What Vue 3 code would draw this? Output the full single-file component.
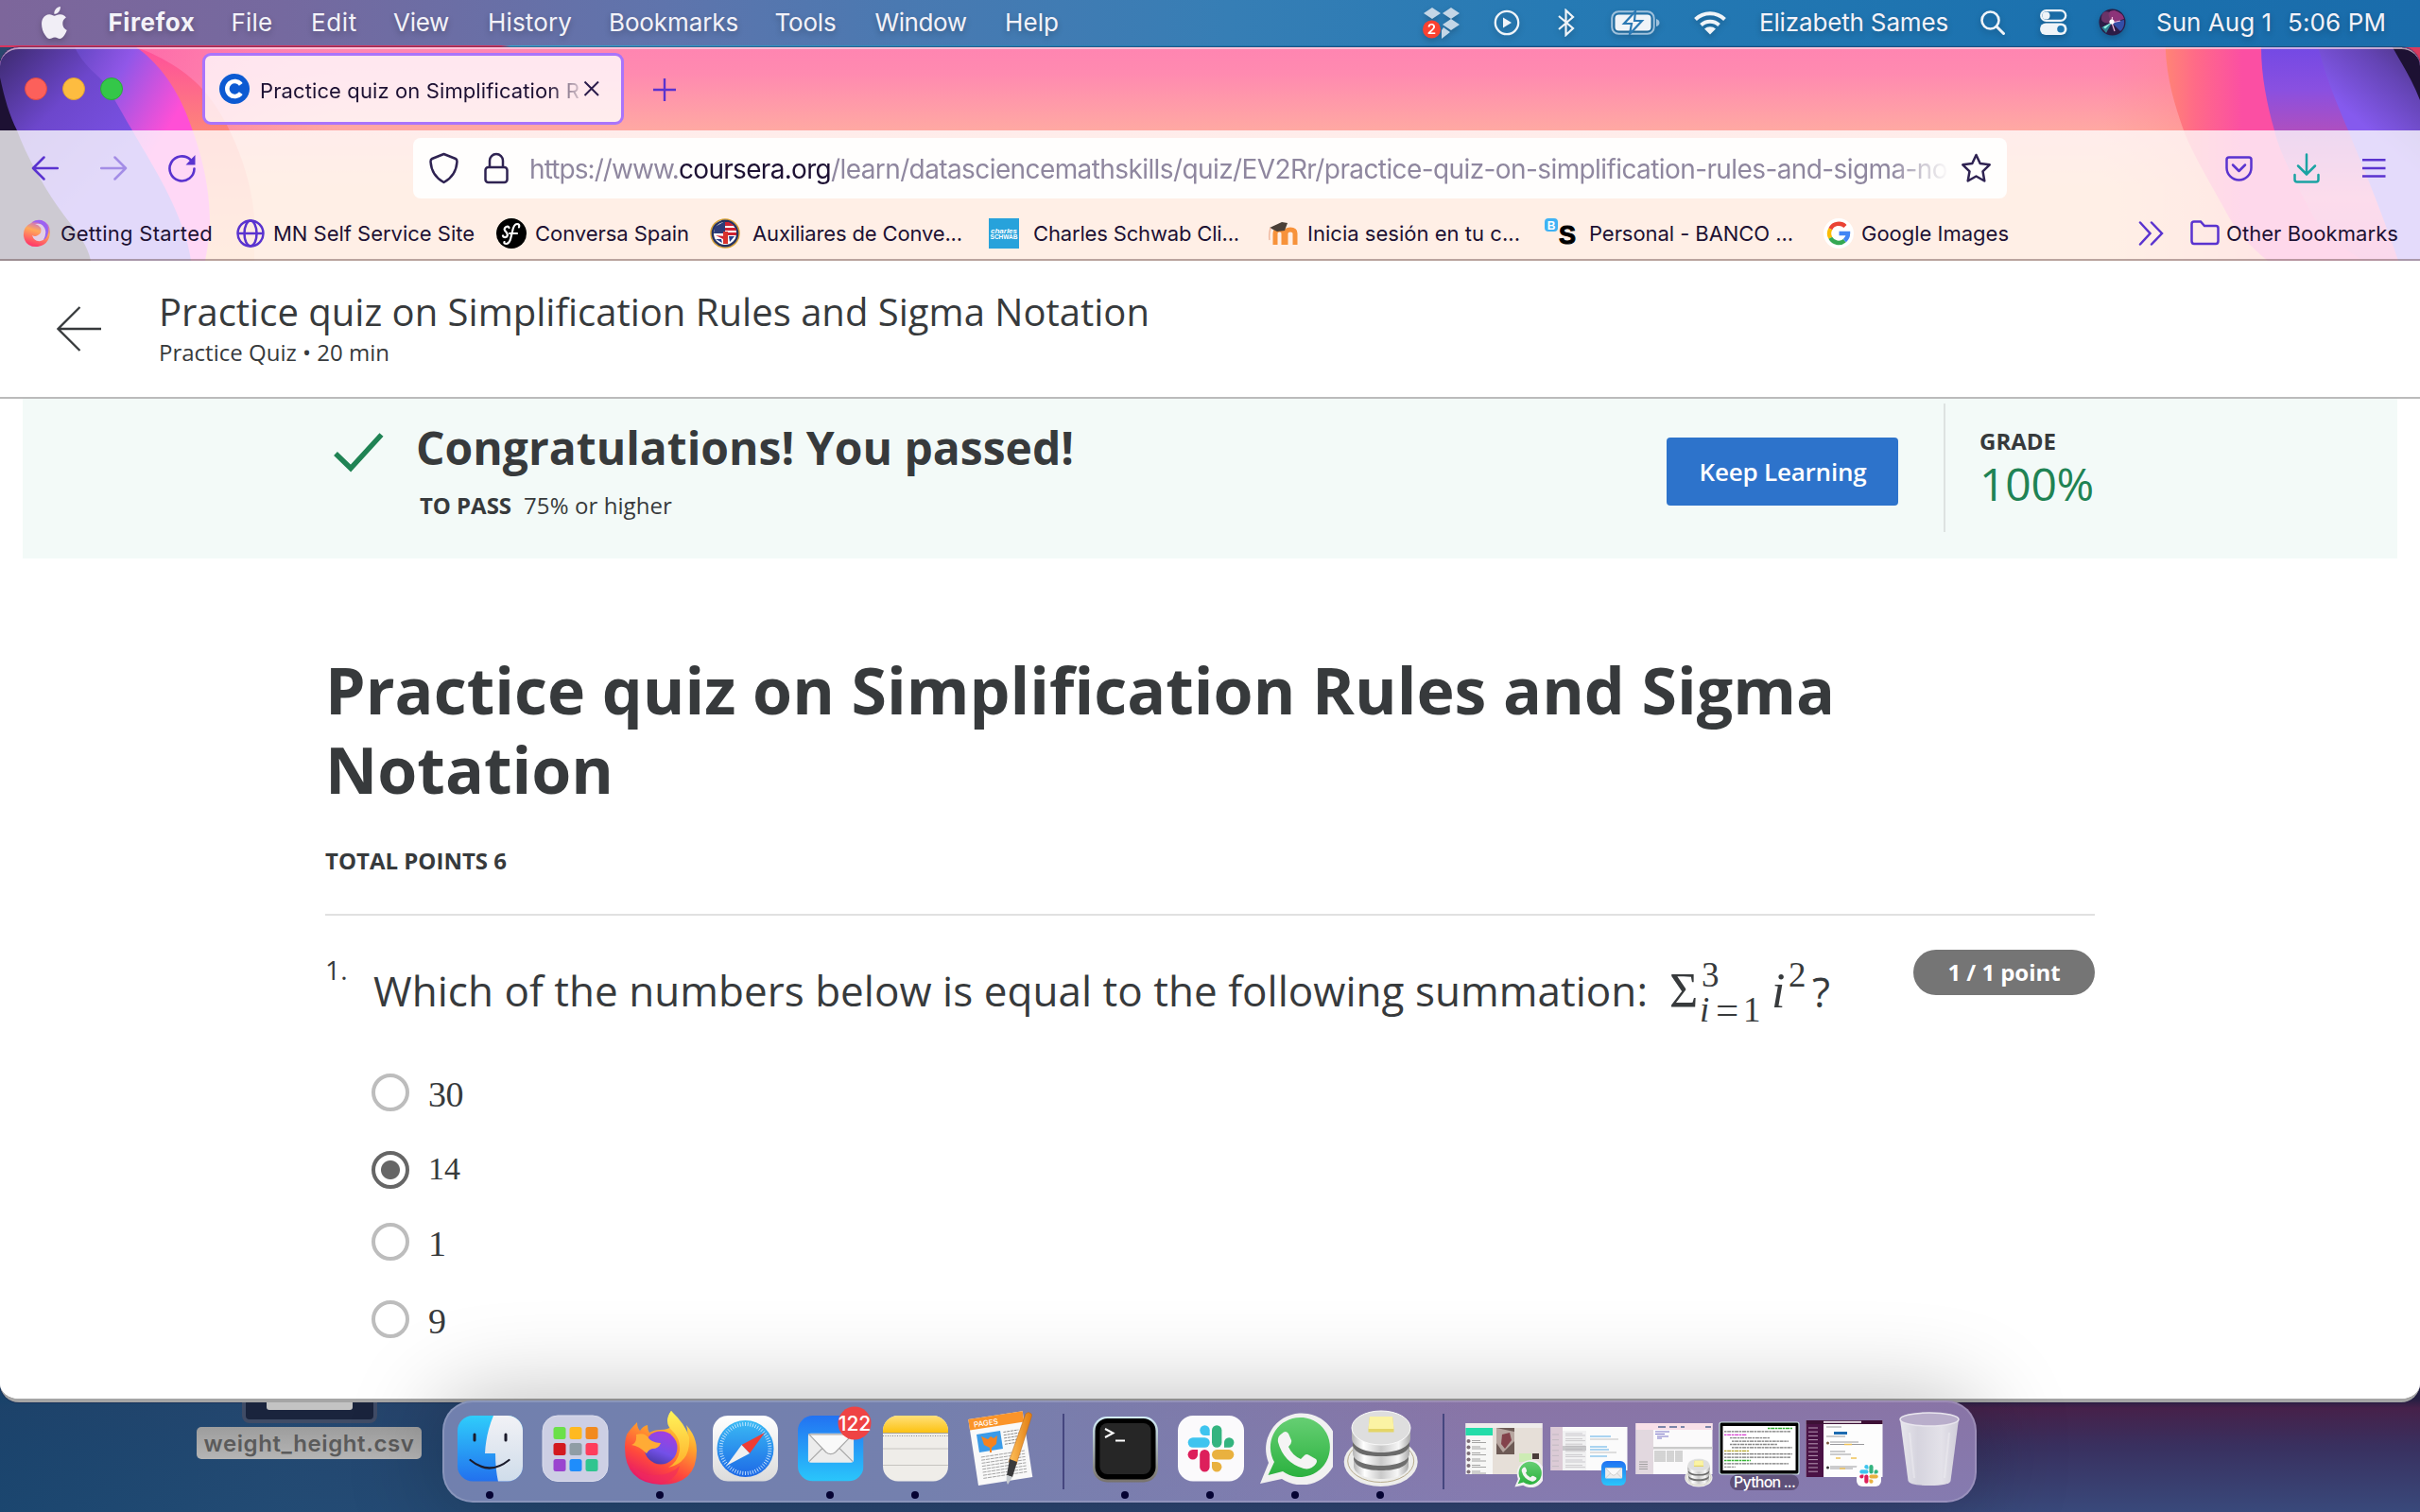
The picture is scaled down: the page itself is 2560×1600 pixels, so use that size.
<script setup>
// Tracks a label so that it fills the given width in pixels
const vFit = {
  mounted(el, { value }) {
    const n = el.textContent.length
    const natural = el.getBoundingClientRect().width
    el.style.letterSpacing = ((value - natural) / n).toFixed(3) + 'px'
  }
}

const menus = [
  ['Firefox', 92], ['File', 44], ['Edit', 49], ['View', 59], ['History', 89],
  ['Bookmarks', 137], ['Tools', 65], ['Window', 97], ['Help', 57]
]

const options = [
  { label: '30', w: 37 },
  { label: '14', w: 34, checked: true },
  { label: '1', w: 18 },
  { label: '9', w: 18 }
]

const pad = ['#6be04a', '#ffb921', '#f28a1e', '#d31a1f', '#8f9da5', '#ff3e5c', '#9a44cf', '#1f8dfb', '#2fc58f']
const ticks = Array.from({ length: 60 }, (_, i) => i * 6)
const chatRows = [0, 1, 2, 3, 4, 5]
const termRows = [
  ['#35b435', 46, 26], ['#777', 0, 70], ['#d63bd0', 0, 24], ['#888', 6, 42], ['#777', 8, 60], ['#888', 6, 50],
  ['#777', 8, 64], ['#b5a52a', 0, 26], ['#777', 0, 72], ['#777', 0, 70], ['#35b435', 0, 28], ['#777', 0, 68], ['#999', 0, 12]
]
</script>

<template>
  <div class="desktop">
    <svg class="defs" width="0" height="0" aria-hidden="true">
      <defs>
        <linearGradient id="gFinder" x1="0" y1="0" x2="0" y2="1"><stop offset="0" stop-color="#2fcdfb" /><stop offset="1" stop-color="#2270ee" /></linearGradient>
        <linearGradient id="gFace" x1="0" y1="0" x2="0" y2="1"><stop offset="0" stop-color="#f2f2f6" /><stop offset="1" stop-color="#cfdcea" /></linearGradient>
        <linearGradient id="gFox" x1=".8" y1="0" x2=".3" y2="1"><stop offset="0" stop-color="#fff04f" /><stop offset=".35" stop-color="#ffa52c" /><stop offset=".7" stop-color="#ff4a3c" /><stop offset="1" stop-color="#e5156b" /></linearGradient>
        <linearGradient id="gFlame" x1="0" y1="0" x2="0" y2="1"><stop offset="0" stop-color="#fff45a" /><stop offset="1" stop-color="#ffae2a" /></linearGradient>
        <linearGradient id="gGlobe" x1=".7" y1="0" x2=".3" y2="1"><stop offset="0" stop-color="#a63ce0" /><stop offset=".6" stop-color="#7350e8" /><stop offset="1" stop-color="#4a3aa8" /></linearGradient>
        <linearGradient id="gSafari" x1="0" y1="0" x2="0" y2="1"><stop offset="0" stop-color="#3abaf4" /><stop offset="1" stop-color="#1d68e6" /></linearGradient>
        <linearGradient id="gMail" x1="0" y1="0" x2="0" y2="1"><stop offset="0" stop-color="#2272f2" /><stop offset="1" stop-color="#2ac6fb" /></linearGradient>
        <linearGradient id="gWhite" x1="0" y1="0" x2="0" y2="1"><stop offset="0" stop-color="#ffffff" /><stop offset="1" stop-color="#dcdcdc" /></linearGradient>
        <linearGradient id="gNote" x1="0" y1="0" x2="0" y2="1"><stop offset="0" stop-color="#ffe07a" /><stop offset="1" stop-color="#fcc211" /></linearGradient>
        <linearGradient id="gWa" x1="0" y1="0" x2="0" y2="1"><stop offset="0" stop-color="#66cf73" /><stop offset="1" stop-color="#2bb13f" /></linearGradient>
        <linearGradient id="gTerm" x1="0" y1="0" x2="0" y2="1"><stop offset="0" stop-color="#d3eefa" /><stop offset="1" stop-color="#77716b" /></linearGradient>
        <linearGradient id="gDisk" x1="0" y1="0" x2="1" y2="0"><stop offset="0" stop-color="#b4b4b4" /><stop offset=".2" stop-color="#ffffff" /><stop offset=".5" stop-color="#c9c9c9" /><stop offset=".8" stop-color="#f7f7f7" /><stop offset="1" stop-color="#aaaaaa" /></linearGradient>
        <linearGradient id="gTrash" x1="0" y1="0" x2="1" y2="0"><stop offset="0" stop-color="#ececf0" /><stop offset=".3" stop-color="#dad9e1" /><stop offset=".7" stop-color="#e8e7ec" /><stop offset="1" stop-color="#d4d2dc" /></linearGradient>
        <linearGradient id="gPen" x1="0" y1="0" x2="1" y2="0"><stop offset="0" stop-color="#ffc15c" /><stop offset="1" stop-color="#e07b10" /></linearGradient>
        <linearGradient id="gSwirl" x1=".6" y1="0" x2=".3" y2="1"><stop offset="0" stop-color="#b45cf0" /><stop offset=".4" stop-color="#ffa95a" /><stop offset="1" stop-color="#ff2f6a" /></linearGradient>
        <linearGradient id="tBase" x1="0" y1="0" x2="0" y2="1"><stop offset="0" stop-color="#ff85b1" /><stop offset=".12" stop-color="#ff8ab0" /><stop offset=".4" stop-color="#ffaaa2" /><stop offset=".65" stop-color="#ffb78f" /><stop offset="1" stop-color="#ffb88c" /></linearGradient>
        <linearGradient id="tDark" x1="0" y1="0" x2=".55" y2=".6"><stop offset="0" stop-color="#3c2a6e" /><stop offset=".5" stop-color="#6d47cc" /><stop offset="1" stop-color="#7b52e6" /></linearGradient>
        <linearGradient id="tPink" x1="85" y1="55" x2="190" y2="115" gradientUnits="userSpaceOnUse"><stop offset="0" stop-color="#6a49c8" /><stop offset=".4" stop-color="#9157e8" /><stop offset="1" stop-color="#ff4fd6" /></linearGradient>
        <linearGradient id="tOr" x1="0" y1="0" x2="0" y2="1"><stop offset="0" stop-color="#ff4f9c" /><stop offset=".4" stop-color="#fd8579" /><stop offset="1" stop-color="#ffab74" /></linearGradient>
        <linearGradient id="tFadeL" x1="0" y1="0" x2="1" y2="0"><stop offset="0" stop-color="#fd5fa6" stop-opacity=".7" /><stop offset="1" stop-color="#fd7fa6" stop-opacity="0" /></linearGradient>
        <linearGradient id="tFadeR" x1="2225" y1="0" x2="2400" y2="0" gradientUnits="userSpaceOnUse"><stop offset="0" stop-color="#ff8b86" stop-opacity="0" /><stop offset="1" stop-color="#ff7d86" stop-opacity=".7" /></linearGradient>
        <linearGradient id="tROr" x1="2290" y1="0" x2="2372" y2="0" gradientUnits="userSpaceOnUse"><stop offset="0" stop-color="#ff8575" /><stop offset=".4" stop-color="#ff6a88" /><stop offset="1" stop-color="#fb4fa3" /></linearGradient>
        <linearGradient id="tRPu" x1="0" y1="0" x2="0" y2="1"><stop offset="0" stop-color="#7349e4" /><stop offset=".2" stop-color="#8a50e0" /><stop offset=".4" stop-color="#b04fbe" /><stop offset=".7" stop-color="#f060a8" /><stop offset="1" stop-color="#e84fa8" /></linearGradient>
        <linearGradient id="tRDk" x1="2555" y1="20" x2="2475" y2="110" gradientUnits="userSpaceOnUse"><stop offset="0" stop-color="#3d2a66" /><stop offset=".5" stop-color="#6444b4" /><stop offset="1" stop-color="#855aee" /></linearGradient>
        <symbol id="slackMark" viewBox="21 26 50 50">
          <g fill="#3ec4ef"><path d="M44.7 37h-5.2a5.2 5.4 0 1 1 5.2-5.4z" /><rect x="21.7" y="39.3" width="23" height="10.4" rx="5.2" /></g>
          <g fill="#34b47f"><rect x="47" y="26.3" width="10.4" height="23.4" rx="5.2" /><path d="M60 49.7v-5.2a5.2 5.2 0 1 1 5.2 5.2z" /></g>
          <g fill="#dd1f5b"><path d="M32 52v5.2a5.2 5.2 0 1 1-5.2-5.2z" /><rect x="34.2" y="52" width="10.4" height="23.4" rx="5.2" /></g>
          <g fill="#e9b13f"><rect x="47" y="52" width="23.3" height="10.4" rx="5.2" /><path d="M47 65h5.2a5.2 5.2 0 1 1-5.2 5.2z" /></g>
        </symbol>
        <symbol id="waMark" viewBox="7 11 78 78">
          <path d="M8 88l9-22a38 38 0 1 1 14 17z" fill="#f1f1f1" />
          <path d="M16.500 79l6.500-14a31.500 31.500 0 1 1 9 10z" fill="url(#gWa)" />
          <path d="M31 35q4-4 7 0l3 7q1 3-3 7q4 9 13 13l4-4q2-2 5 0l7 4q2 2 0 5q-5 7-13 5q-21-6-27-28q-1-6 4-9z" fill="#f4f4f4" />
        </symbol>
        <symbol id="diskMark" viewBox="6 10 80 82">
          <ellipse cx="45.700" cy="65" rx="39" ry="26" fill="#ededeb" />
          <ellipse cx="45.700" cy="64" rx="35" ry="22.500" fill="none" stroke="#b7ab8d" stroke-width="1" />
          <path d="M17 62v7c0 9 13 14 29 14s29-5 29-14v-7z" fill="url(#gDisk)" />
          <path d="M17 50v12c2 9 14 12 29 12s27-3 29-12V50z" fill="#6e6e6e" />
          <path d="M16 46v10c0 8 14 13 30 13s30-5 30-13V46z" fill="url(#gDisk)" />
          <path d="M16 36v12c3 9 15 11 30 11s27-2 30-11V36z" fill="#6a6a6a" />
          <path d="M15 29v11c0 9 14 15 31 15s31-6 31-15V29z" fill="url(#gDisk)" />
          <ellipse cx="46" cy="29" rx="31" ry="18" fill="#dedede" stroke="#fafafa" />
          <path d="M34 17h24l1.500 13v3.500h-27V30z" fill="#e4d567" /><path d="M34 17h24l1.500 13h-27z" fill="#fbf3a4" />
        </symbol>
        <symbol id="mailMark" viewBox="10 16 70 70">
          <rect x="10" y="16" width="70" height="70" rx="16" fill="url(#gMail)" />
          <rect x="21" y="35" width="48.500" height="31" rx="3" fill="#ececec" />
          <path d="M22 65l15-15M68.500 65l-15-15" stroke="#aaa" stroke-width="1.200" />
          <path d="M22 36l18 19q5 4 10 0l18.500-19z" fill="#f9f9f9" stroke="#a8a8a8" stroke-width="1.200" />
        </symbol>
      </defs>
    </svg>

    <!-- System menu bar -->
    <header class="menubar">
      <svg class="shade" width="27" height="34" viewBox="2.2 0 19.800 24" preserveAspectRatio="none"><path fill="#f1eef6" d="M12.152 6.896c-.948 0-2.415-1.078-3.96-1.04-2.04.027-3.91 1.183-4.961 3.014-2.117 3.675-.546 9.103 1.519 12.09 1.013 1.454 2.208 3.09 3.792 3.039 1.52-.065 2.09-.987 3.935-.987 1.831 0 2.35.987 3.96.948 1.637-.026 2.676-1.48 3.676-2.948 1.156-1.688 1.636-3.325 1.662-3.415-.039-.013-3.182-1.221-3.22-4.857-.026-3.04 2.48-4.494 2.597-4.559-1.429-2.09-3.623-2.324-4.39-2.376-2-.156-3.675 1.09-4.61 1.09zM15.53 3.83c.843-1.012 1.4-2.427 1.245-3.83-1.207.052-2.662.805-3.532 1.818-.78.896-1.454 2.338-1.273 3.714 1.338.104 2.715-.688 3.559-1.701" /></svg>
      <div v-for="(m, i) in menus" :key="m[0]"><span v-fit="m[1]" class="fit" :class="{ strong: i === 0 }">{{ m[0] }}</span></div>

      <svg class="shade" width="40" height="36" viewBox="0 0 40 36">
        <path d="M10 2l9 6-9 6-9-6zM30 2l9 6-9 6-9-6zM30 14l9 6-9 6-9-6zM20 26l2-3 7 5-9 7z" fill="#c4d6e6" />
        <circle cx="9.500" cy="25" r="9.500" fill="#fb4130" /><text x="9.500" y="30" class="drop-n">2</text>
      </svg>
      <svg class="shade" width="28" height="28" viewBox="0 0 28 28"><circle cx="14" cy="14" r="12.200" fill="none" stroke="#f0f4f8" stroke-width="2.300" /><path d="M10 8.500v11l9-5.500z" fill="#f0f4f8" /></svg>
      <svg class="shade" width="18" height="30" viewBox="0 0 18 30"><path d="M1 8l15 13-7.500 7V2L16 9 1 22" fill="none" stroke="#f0f4f8" stroke-width="2.200" /></svg>
      <svg class="shade" width="52" height="26" viewBox="0 0 52 26"><rect x="1.200" y="1.200" width="44.500" height="23.600" rx="7" fill="none" stroke="#9fc1dc" stroke-width="2" /><rect x="4.500" y="4.500" width="38" height="17" rx="4" fill="#f0f4f8" /><path d="M48 9q3.500 1 3.500 4t-3.500 4z" fill="#9fc1dc" /><path d="M26 1L14 14h8l-2 11 13-14h-8z" fill="#f0f4f8" stroke="#2b79b4" stroke-width="2.200" /></svg>
      <svg class="shade" width="34" height="26" viewBox="0 0 34 26"><g fill="none" stroke="#f0f4f8" stroke-width="4"><path d="M1.500 9.500a22.500 22.500 0 0 1 31 0" /><path d="M7.500 15.500a14 14 0 0 1 19 0" /></g><path d="M17 25.500l-6-6a9 9 0 0 1 12 0z" fill="#f0f4f8" /></svg>
      <div><span v-fit="200" class="fit">Elizabeth Sames</span></div>
      <svg class="shade" width="26" height="26" viewBox="0 0 26 26"><circle cx="10.500" cy="10.500" r="9" fill="none" stroke="#f0f4f8" stroke-width="2.600" /><path d="M17 17l7.500 7.500" stroke="#f0f4f8" stroke-width="3" stroke-linecap="round" /></svg>
      <svg class="shade" width="29" height="27" viewBox="0 0 29 27"><rect x="1.200" y="1.200" width="26" height="10.600" rx="5.300" fill="none" stroke="#f0f4f8" stroke-width="2.300" /><circle cx="6.500" cy="6.500" r="4" fill="#f0f4f8" /><rect x="0" y="14.500" width="28.500" height="12.500" rx="6.200" fill="#f0f4f8" /><circle cx="22" cy="20.700" r="3.800" fill="#2075b1" /></svg>
      <svg class="shade" width="29" height="29" viewBox="0 0 29 29"><circle cx="14.500" cy="14.500" r="14" fill="#2c1c46" /><path d="M14 15Q6 2 17 2q9 3 10 9z" fill="#a63a86" opacity=".8" /><path d="M14 15q-12 2-11-6t9-5z" fill="#7a3a70" opacity=".8" /><path d="M14 15l13-3q1 8-4 12z" fill="#3557b8" opacity=".85" /><path d="M14 15L3 20l5 6z" fill="#2f9ca8" opacity=".8" /><path d="M14.500 9l-.5 6 9-2M14 15l3 9" stroke="#f3b8dc" stroke-width="1.200" fill="none" /><path d="M14 14.500L5 19.500l2 2z" fill="#8ff0e0" /><circle cx="14" cy="14" r="2.600" fill="#fff" /></svg>
      <div><span v-fit="122" class="fit">Sun Aug 1</span></div>
      <div><span v-fit="104" class="fit">5:06 PM</span></div>
    </header>

    <!-- Browser window -->
    <section class="window">
      <div class="chrome">
        <svg class="theme" width="2560" height="226" viewBox="0 50 2560 226" preserveAspectRatio="none">
          <rect x="0" y="50" width="2560" height="226" fill="url(#tBase)" />
          <path d="M144 50h220v88H200z" fill="url(#tFadeL)" />
          <path d="M144 50C165 57 200 75 219 100C244 130 266 185 269 230V276H0V50z" fill="url(#tOr)" />
          <path d="M0 50h144C165 64 185 90 197 120S222 190 222 235C222 250 219 265 217 276H0z" fill="url(#tPink)" />
          <path d="M0 50h79C88 68 98 75 108 85C120 102 132 125 140 138C158 170 195 225 202 276H0z" fill="url(#tDark)" />
          <path d="M0 82C5 105 10 122 18 138C28 165 45 195 60 217S92 255 96 276H0z" fill="#1d1133" />
          <path d="M2225 50h175v226h-175z" fill="url(#tFadeR)" />
          <path d="M2290.700 50C2292 85 2301 112 2310 138C2320 165 2345 205 2358 230C2370 250 2385 265 2399 276H2560V50z" fill="url(#tROr)" />
          <path d="M2392 50C2392 80 2398 110 2406 138C2412 165 2435 205 2445 225S2475 260 2500 276H2560V50z" fill="url(#tRPu)" />
          <path d="M2452.600 50C2458 75 2470 105 2484 138C2497 170 2520 225 2537 276H2560V50z" fill="url(#tRDk)" />
          <path d="M2531 50C2541 68 2552 85 2560 106V50z" fill="#1d1133" />
        </svg>

        <div class="tabs">
          <i class="light red"></i><i class="light amber"></i><i class="light green"></i>
          <div class="tab">
            <svg width="32" height="32" viewBox="0 0 32 32"><circle cx="16" cy="16" r="16" fill="#0c5ad2" /><path d="M22.800 11.300A8 8 0 1 0 22.800 20.700" fill="none" stroke="#fff" stroke-width="4.600" /></svg>
            <div class="tab-title"><span v-fit="338" class="fit">Practice quiz on Simplification R</span></div>
            <svg width="18" height="18" viewBox="0 0 18 18"><path d="M1.500 1.500l14.500 14.500M16 1.500L1.500 16" stroke="#2b1c4b" stroke-width="2" /></svg>
          </div>
          <svg class="plus" width="26" height="26" viewBox="0 0 26 26"><path d="M13 1v24M1 13h24" stroke="#5a33cf" stroke-width="2.400" /></svg>
        </div>

        <div class="toolbar">
          <svg width="29" height="26" viewBox="0 0 29 26"><path d="M28 13H2M13.500 1.500L2 13l11.500 11.500" fill="none" stroke="#5a33cf" stroke-width="2.500" stroke-linejoin="round" stroke-linecap="round" /></svg>
          <svg width="29" height="26" viewBox="0 0 29 26" class="dim"><path d="M1 13h26M15.500 1.500L27 13 15.500 24.500" fill="none" stroke="#5a33cf" stroke-width="2.500" stroke-linejoin="round" stroke-linecap="round" /></svg>
          <svg width="30" height="30" viewBox="0 0 30 30"><path d="M27.500 15.500A13 13 0 1 1 23.500 6" fill="none" stroke="#5a33cf" stroke-width="2.600" stroke-linecap="round" /><path d="M28.500 1v10.500H18.500z" fill="#5a33cf" /></svg>
          <div class="urlbar">
            <svg width="31" height="34" viewBox="0 0 31 34"><path d="M15.500 2L28 7q1.500.7 1.500 3-1 15-14 22Q2.500 25 1.500 10q0-2.300 1.500-3z" fill="none" stroke="#2f2352" stroke-width="2.500" stroke-linejoin="round" /></svg>
            <svg width="26" height="34" viewBox="0 0 26 34"><rect x="1.500" y="16" width="23" height="16" rx="3" fill="none" stroke="#2f2352" stroke-width="2.500" /><path d="M6 16V9a7 7 0 0 1 14 0v7" fill="none" stroke="#2f2352" stroke-width="2.500" /></svg>
            <div class="url"><span v-fit="158" class="fit">https://www.</span><b><span v-fit="161" class="fit">coursera.org</span></b><span v-fit="1181" class="fit">/learn/datasciencemathskills/quiz/EV2Rr/practice-quiz-on-simplification-rules-and-sigma-no</span></div>
            <svg width="33" height="32" viewBox="0 0 33 32"><path d="M16.500 2l4.200 9 10 1.300-7.200 7 1.800 10.200-8.800-5-8.800 5 1.800-10.200-7.200-7 10-1.300z" fill="none" stroke="#2f2352" stroke-width="2.500" stroke-linejoin="round" /></svg>
          </div>
          <svg width="29" height="27" viewBox="0 0 29 27"><path d="M4 1.500h21q2.500 0 2.500 2.500v8.500a13 13 0 0 1-26 0V4Q1.500 1.500 4 1.500z" fill="none" stroke="#5a33cf" stroke-width="2.500" /><path d="M8 9.500l6.500 6.500L21 9.500" fill="none" stroke="#5a33cf" stroke-width="2.500" stroke-linecap="round" stroke-linejoin="round" /></svg>
          <svg width="28" height="32" viewBox="0 0 28 32"><path d="M14 1.500v21M5 13.500l9 9 9-9M1.500 23v5q0 2.500 2.500 2.500h20q2.500 0 2.500-2.500v-5" fill="none" stroke="#1aa3a3" stroke-width="2.500" stroke-linecap="round" /></svg>
          <svg width="25" height="22" viewBox="0 0 25 22"><path d="M0 2.200h24.500M0 11h24.500M0 19.500h24.500" stroke="#5a33cf" stroke-width="2.500" /></svg>
        </div>

        <nav class="bookmarks">
          <a><i class="w40"><svg width="30" height="30" viewBox="0 0 30 30"><path d="M9 4q4-4 11-3 9 3 9 13-1 13-13 15Q3 30 1 18 0 8 9 4z" fill="url(#gSwirl)" /><path d="M13 5q10-2 12 7 1 9-6 11-7 1-9-6 3 2 6 0 5-3 3-8-2-3-6-4z" fill="#e3cfe6" /><path d="M10 3.500Q17-1 23 3q5 4 4 11-1 6-5 8 4-8 1-13-4-7-13-5.500z" fill="#9a63f2" /></svg></i><span v-fit="161" class="fit">Getting Started</span></a>
          <a><i class="w39"><svg width="30" height="30" viewBox="0 0 30 30"><g fill="none" stroke="#5a33cf" stroke-width="2.500"><circle cx="15" cy="15" r="13.500" /><ellipse cx="15" cy="15" rx="6.500" ry="13.500" /><path d="M1.500 15h27" /></g></svg></i><span v-fit="213" class="fit">MN Self Service Site</span></a>
          <a><i class="w41"><svg width="32" height="32" viewBox="0 0 32 32"><circle cx="16" cy="16" r="16" fill="#000" /><path d="M24 9.500Q25 6 22 6q-3.500 0-5 8l-2 8q-1.500 5-4.500 5Q8 27 8.500 25M14 16h8M13.500 10Q13 8 10.500 9 7 11 10 14t1 5.500Q8 21 7 18.500" fill="none" stroke="#fff" stroke-width="2.200" stroke-linecap="round" /></svg></i><span v-fit="163" class="fit">Conversa Spain</span></a>
          <a><i class="w45"><svg width="32" height="32" viewBox="0 0 32 32"><circle cx="16" cy="16" r="15" fill="#fff" stroke="#d9a233" stroke-width="1.600" /><circle cx="16" cy="16" r="13.200" fill="none" stroke="#26315f" stroke-width="2.400" /><path d="M5 9l11-6v13H4z" fill="#2d3c78" /><path d="M16 4h4l6 4h-10zM16 10h11l1 3H16zM16 15h12v3H16zM6 18l10 1v4z" fill="#cc2233" /><path d="M14 14h5v13h-5z" fill="#d8322c" /><path d="M20 19h6l-5 6zM6 22h6l1 4z" fill="#27408b" /></svg></i><span v-fit="222" class="fit">Auxiliares de Conve...</span></a>
          <a><i class="w47"><svg width="32" height="32" viewBox="0 0 32 32"><rect width="32" height="32" fill="#27a2db" /><text x="16" y="15.500" class="tiny-i">charles</text><text x="16" y="22" class="tiny-b">SCHWAB</text></svg></i><span v-fit="218" class="fit">Charles Schwab Cli...</span></a>
          <a><i class="w42"><svg width="34" height="26" viewBox="0 0 34 26"><path d="M8 25V13q0-4 4.500-4t4.500 4v12M19 25V13q0-4 5-4t5 4v12" fill="none" stroke="#f7923a" stroke-width="5" /><path d="M2 7l13-6 6 1-3 8-8 1z" fill="#4a4038" /><path d="M3 7q-2 8-1 13" stroke="#f0b9a0" fill="none" stroke-width="1.500" /></svg></i><span v-fit="225" class="fit">Inicia sesión en tu c...</span></a>
          <a><i class="w47"><svg width="34" height="36" viewBox="0 -3 34 36"><rect x="0" y="-1" width="14" height="14" rx="4" fill="#3fb2f4" /><text x="7" y="10.500" class="b-mark">B</text><text x="24" y="26" class="s-mark">S</text></svg></i><span v-fit="216" class="fit">Personal - BANCO ...</span></a>
          <a><i class="w40"><svg width="32" height="32" viewBox="0 0 32 32"><circle cx="16" cy="16" r="16" fill="#fff" /><g fill="none" stroke-width="4.400"><path d="M23 8.500A10 10 0 0 0 7.300 11.200" stroke="#ea4335" /><path d="M7.300 11.200a10 10 0 0 0 0 9.600" stroke="#fbbc05" /><path d="M7.300 20.800A10 10 0 0 0 22.300 23.700" stroke="#34a853" /><path d="M22.300 23.700Q26 20.500 26 16H16.500" stroke="#4285f4" /></g></svg></i><span v-fit="156" class="fit">Google Images</span></a>
          <a><svg width="27" height="26" viewBox="0 0 27 26"><path d="M2 1.500L12.500 13 2 24.500M14 1.500L25 13 14 24.500" fill="none" stroke="#5a33cf" stroke-width="2.500" stroke-linecap="round" /></svg></a>
          <a><i class="w38"><svg width="31" height="27" viewBox="0 0 31 27"><path d="M1.500 22V4q0-2.500 2.500-2.500h7l4 4.500h12q2.500 0 2.500 2.500V22q0 3-2.500 3H4q-2.500 0-2.500-3z" fill="none" stroke="#5a33cf" stroke-width="2.500" /></svg></i><span v-fit="182" class="fit">Other Bookmarks</span></a>
        </nav>
      </div>

      <main class="page">
        <div class="lesson">
          <svg width="48" height="48" viewBox="0 0 48 48"><path d="M47 24H2M24.500 1L1.500 24l23 23" fill="none" stroke="#373a3c" stroke-width="2.300" /></svg>
          <div>
            <div class="lesson-title"><span v-fit="1048" class="fit">Practice quiz on Simplification Rules and Sigma Notation</span></div>
            <div class="lesson-sub"><span v-fit="244" class="fit">Practice Quiz • 20 min</span></div>
          </div>
        </div>

        <div class="banner">
          <svg class="check" width="55" height="44" viewBox="0 0 55 44"><path d="M3 23l16 15.500L51.500 3" fill="none" stroke="#1f8354" stroke-width="5.500" /></svg>
          <div class="verdict">
            <div class="congrats"><span v-fit="696" class="fit">Congratulations! You passed!</span></div>
            <div class="topass"><b><span v-fit="97" class="fit">TO PASS</span></b><span v-fit="157" class="fit">75% or higher</span></div>
          </div>
          <button class="keep"><span v-fit="177" class="fit">Keep Learning</span></button>
          <div class="grade">
            <b><span v-fit="81" class="fit">GRADE</span></b>
            <div class="score"><span v-fit="121" class="fit">100%</span></div>
          </div>
        </div>

        <div class="quiz">
          <h1><span v-fit="1597" class="fit">Practice quiz on Simplification Rules and Sigma</span><br /><span v-fit="305" class="fit">Notation</span></h1>
          <div class="points"><span v-fit="192" class="fit">TOTAL POINTS 6</span></div>
          <div class="question">
            <div class="num"><span v-fit="24" class="fit">1.</span></div>
            <div class="prompt"><span v-fit="1348" class="fit">Which of the numbers below is equal to the following summation:</span></div>
            <svg class="math" width="190" height="90" viewBox="1760 1005 190 90">
              <text x="1766" y="1066" class="m52">Σ</text>
              <text x="1800" y="1044" class="m37">3</text>
              <text x="1798" y="1081" class="m37 it">i</text>
              <text x="1815" y="1083" class="m43">=</text>
              <text x="1844" y="1081" class="m37">1</text>
              <text x="1874" y="1066" class="m52 it">i</text>
              <text x="1892" y="1044" class="m37">2</text>
              <text x="1917" y="1066" class="ask">?</text>
            </svg>
            <div class="badge"><span v-fit="119" class="fit">1 / 1 point</span></div>
          </div>
          <div class="options">
            <label v-for="o in options" :key="o.label" :class="{ on: o.checked }">
              <i class="radio"></i><span v-fit="o.w" class="fit">{{ o.label }}</span>
            </label>
          </div>
        </div>
      </main>
    </section>

    <!-- Desktop file and dock -->
    <footer class="shelf">
      <div class="file">
        <div class="thumb"><i></i></div>
        <div class="fname"><span v-fit="223" class="fit">weight_height.csv</span></div>
      </div>

      <div class="dock">
        <svg class="app" viewBox="0 0 90 108"><clipPath id="cf"><rect x="11" y="16" width="69" height="69.500" rx="16" /></clipPath><g clip-path="url(#cf)"><rect x="11" y="16" width="69" height="70" fill="url(#gFinder)" /><path d="M49 16Q41 35 40 56h11q0 16 3 30h28V16z" fill="url(#gFace)" /></g><path d="M29 36v6M62 36v6" stroke="#1b1b2b" stroke-width="3" stroke-linecap="round" /><path d="M24.500 63q20 17 41 0" fill="none" stroke="#1b1b2b" stroke-width="2.200" stroke-linecap="round" /><circle cx="45" cy="100" r="4" fill="#050333" /></svg>
        <svg class="app" viewBox="0 0 90 108"><rect x="11" y="16" width="69" height="69.500" rx="16" fill="#cdcfe4" stroke="#dcdeee" /><rect v-for="(c, i) in pad" :key="i" :x="22.500 + (i % 3) * 17" :y="28 + Math.floor(i / 3) * 17" width="13" height="13" rx="2.500" :fill="c" /></svg>
        <svg class="app" viewBox="0 0 90 108">
          <path d="M10 36Q13 31 21 23q0 6 3 9 3-5 8-6 0 5 2 8 5-3 12-3 8 0 12-4Q51 18 57 11q5 8 11 14 5 6 6 14 1-7-1-13 11 12 11 27 0 36-38 36Q8 87 8 50q0-8 2-14z" fill="url(#gFox)" />
          <path d="M57 11q-9 12 2 22 8 8 7 20-2 12-12 18 24-6 22-32Q72 25 57 11z" fill="url(#gFlame)" />
          <circle cx="46" cy="50" r="17.500" fill="url(#gGlobe)" />
          <path d="M20 36q10-3 14 5 5 4 12 4-2 6-9 6-4 1-6 5-8-8-16-9 6-2 5-11z" fill="#ffab35" /><path d="M14 66q8 12 22 13 20 1 30-10-4 18-24 18T14 66z" fill="#ef2a60" opacity=".55" />
          <circle cx="45" cy="100" r="4" fill="#050333" />
        </svg>
        <svg class="app" viewBox="0 0 90 108"><rect x="11" y="16" width="69" height="69.500" rx="16" fill="url(#gWhite)" /><circle cx="45.500" cy="51" r="30" fill="url(#gSafari)" /><path v-for="t in ticks" :key="t" d="M45.500 23v4" :transform="`rotate(${t} 45.500 51)`" stroke="#d6ecff" stroke-width=".8" /><path d="M66 34L50 56l-8.500-9z" fill="#ef3c34" /><path d="M25.500 69l16-22 8.500 9z" fill="#f0f0f0" /></svg>
        <svg class="app" viewBox="0 0 90 108"><use href="#mailMark" x="11" y="16" width="69.500" height="69.500" /><circle cx="71" cy="24" r="17.500" fill="#ef4344" /><text x="71" y="31.500" class="count">122</text><circle cx="45" cy="100" r="4" fill="#050333" /></svg>
        <svg class="app" viewBox="0 0 90 108"><clipPath id="cn"><rect x="11" y="16" width="69" height="69.500" rx="16" /></clipPath><g clip-path="url(#cn)"><rect x="11" y="16" width="69" height="70" fill="#efede9" /><rect x="11" y="16" width="69" height="18" fill="url(#gNote)" /><path d="M11 34.500h70" stroke="#a9a293" /><path d="M11 37.500h70" stroke="#888" stroke-dasharray="1 1.500" /><path d="M11 51h70M11 68.500h70" stroke="#c6c4c0" /></g><circle cx="45" cy="100" r="4" fill="#050333" /></svg>
        <svg class="app" viewBox="0 0 90 108">
          <path d="M11.300 20l57.400-8.700L79.300 81 22 90z" fill="#f9f9f9" /><path d="M11.300 20l57.400-8.700 1.600 11.200-57.300 9z" fill="#fb9429" />
          <text x="17.500" y="28.500" class="pages" transform="rotate(-8 17.500 28.500)">PAGES</text>
          <path d="M20 36l25-4 3 19-25 4z" fill="#3b9be8" /><path d="M25 38l7 3 3-3 3 2 4-3-1 9-5 4v5h-2v-5l-6-3z" fill="#f5821f" />
          <path v-for="n in 5" :key="n" d="M48 33.500l16-2.500" :transform="`translate(${n * .4} ${(n - 1) * 3.200})`" stroke="#8c8c8c" stroke-width="1" stroke-dasharray="3 .8" />
          <path v-for="n in 8" :key="'b' + n" d="M24.500 60l46-7" :transform="`translate(${n * .35} ${(n - 1) * 3.200})`" stroke="#9a9a9a" stroke-width=".9" stroke-dasharray="4 .8" />
          <path d="M72 14q3-3 6 0 1 1 0 4L62 68l-8-3z" fill="url(#gPen)" stroke="#b5651a" stroke-width=".5" /><path d="M55 62l8 3-5 16-6-2z" fill="#3a3a3c" /><path d="M52 79l6 2-5 8q-2-4-1-10z" fill="#c7ccd0" />
        </svg>
        <i class="sep"></i>
        <svg class="app" viewBox="0 0 90 108"><rect x="11" y="17" width="69" height="69.500" rx="15" fill="url(#gTerm)" /><rect x="13.500" y="19" width="64" height="64.500" rx="13" fill="#000" /><rect x="18.500" y="24" width="54" height="54" rx="8" fill="#262626" /><path d="M24 30l8.500 4.500-8.500 4.500M35 42.500h10" fill="none" stroke="#fff" stroke-width="2" /><circle cx="45" cy="100" r="4" fill="#050333" /></svg>
        <svg class="app" viewBox="0 0 90 108"><rect x="11" y="16" width="70" height="69.500" rx="16" fill="#fbfafc" /><use href="#slackMark" x="21" y="26" width="50" height="50" /><circle cx="45" cy="100" r="4" fill="#050333" /></svg>
        <svg class="app" viewBox="0 0 90 108"><use href="#waMark" x="7" y="11" width="78" height="78" /><circle cx="45" cy="100" r="4" fill="#050333" /></svg>
        <svg class="app" viewBox="0 0 90 108"><use href="#diskMark" x="6" y="10" width="80" height="82" /><circle cx="45" cy="100" r="4" fill="#050333" /></svg>
        <i class="sep"></i>
        <svg class="app" viewBox="0 0 90 108">
          <rect x="4.500" y="24" width="81" height="54" fill="#f7f7f6" /><rect x="4.500" y="24" width="81" height="5" fill="#efeceb" /><rect x="33" y="29" width="52.500" height="49" fill="#e6dfd8" /><rect x="4.500" y="29" width="28.500" height="8" fill="#24dca9" />
          <circle v-for="r in chatRows" :key="r" cx="7.500" :cy="43 + r * 6.500" r="2" fill="#7d6e77" /><path v-for="r in chatRows" :key="'l' + r" d="M11 42.500h9M11 44.500h15" :transform="`translate(0 ${r * 6.500})`" stroke="#8f8f8f" stroke-width=".8" />
          <path d="M37 29h19v28H37z" fill="#6d5a55" /><path d="M37 29l19 4v10l-12 12-7-10z" fill="#b7a6a0" /><path d="M43 36l8-2 2 8-7 9-4-5z" fill="#83424b" /><rect x="61" y="56" width="13" height="9" fill="#cdecb4" /><rect x="75" y="56" width="7" height="6" fill="#4a3d3a" />
          <use href="#waMark" x="56" y="62" width="30" height="30" />
        </svg>
        <svg class="app" viewBox="0 0 90 108">
          <rect x="4.500" y="28" width="81" height="46" fill="#fbfbfb" /><rect x="4.500" y="28" width="12.500" height="46" fill="#dccbd6" /><rect x="17" y="32" width="25" height="42" fill="#f1f1f2" /><rect x="17" y="48" width="25" height="5" fill="#c9c9cb" />
          <path v-for="r in 7" :key="r" d="M20 35h18M20 37h21M6 36h7" :transform="`translate(0 ${(r - 1) * 5.600})`" stroke="#b4b0b6" stroke-width=".6" />
          <path d="M46 38h22M46 49h18M46 52h20M46 59h18" stroke="#5aaee8" stroke-width="1.200" /><path d="M46 41h30M46 55h28" stroke="#9a9a9a" stroke-width=".6" />
          <use href="#mailMark" x="58" y="64" width="26" height="26" />
        </svg>
        <svg class="app" viewBox="0 0 90 108">
          <rect x="4.500" y="24" width="81" height="54" fill="#fbfafb" /><rect x="4.500" y="24" width="81" height="7" fill="#f8dfe8" /><rect x="4.500" y="31" width="18.500" height="47" fill="#e2d8df" />
          <path d="M25 33h15M25 35.500h10M27 38h12M27 40h5" stroke="#7b76c8" stroke-width="1" /><rect x="23" y="49" width="62.500" height="2.500" fill="#cacaca" /><path v-for="r in 6" :key="r" d="M24 54h12M37 54h8M46 54h8" :transform="`translate(0 ${(r - 1) * 2})`" stroke="#999" stroke-width=".8" /><path d="M28 28h8M40 28h8M52 28h4M78 28h6" stroke="#7b84a8" stroke-width="2" /><path v-for="r in 4" :key="'s' + r" d="M8 65h9" :transform="`translate(0 ${(r - 1) * 2.500})`" stroke="#999" stroke-width=".9" />
          <use href="#diskMark" x="56" y="61" width="30" height="31" />
        </svg>
        <svg class="app" viewBox="0 0 90 108">
          <rect x="3" y="23" width="84" height="55" rx="2" fill="#000" stroke="#cfe7e6" stroke-width="1.200" /><rect x="6.500" y="27" width="77" height="47" fill="#fff" />
          <path v-for="(r, i) in termRows" :key="i" :d="`M${8 + r[1]} ${29.500 + i * 3.400}h${r[2]}`" :stroke="r[0]" stroke-width="1.300" stroke-dasharray="2.500 .7 4 .7" />
          <rect x="14" y="78.500" width="73" height="16.500" rx="8" fill="#5e5079" /><text x="50.500" y="92" class="pylabel">Python ...</text>
        </svg>
        <svg class="app" viewBox="0 0 90 108">
          <rect x="4.500" y="21" width="81" height="60" fill="#fdfdfd" /><rect x="4.500" y="21" width="81" height="4" fill="#3d1136" /><rect x="23" y="21.800" width="40" height="2" fill="#e9e0e8" /><rect x="4.500" y="25" width="18.500" height="56" fill="#4a1245" />
          <path v-for="r in 12" :key="r" d="M7 29h10" :transform="`translate(0 ${(r - 1) * 4.200})`" stroke="#b79ab5" stroke-width="1" /><path d="M34 34.500h14" stroke="#1d6bb0" stroke-width="3" /><path d="M26 28h16M26 38h20M30 44h30M30 46.500h36M30 54h16M30 57h22M30 70h30M30 72h24" stroke="#8f8f92" stroke-width=".9" /><path d="M45 46.500h8M36 61h5M52 61h6M40 72h6" stroke="#efc25a" stroke-width="1.600" /><circle cx="27.500" cy="45" r="1.500" fill="#7b5a3c" /><circle cx="27.500" cy="71" r="1.500" fill="#333" />
          <rect x="58" y="65" width="26" height="26" rx="6" fill="#fdfdfd" /><use href="#slackMark" x="61" y="68" width="20" height="20" />
        </svg>
        <svg class="app" viewBox="0 0 90 108"><path d="M14 20l8.500 65q1 5 22.500 5t22.500-5L76 20z" fill="url(#gTrash)" opacity=".95" /><ellipse cx="45" cy="20" rx="31" ry="7" fill="#b9aecb" stroke="#e9e6ee" stroke-width="1.500" /><path d="M24 34l5 48M66 34l-5 48" stroke="#f4f3f6" stroke-width="2" opacity=".4" /></svg>
      </div>
    </footer>
  </div>
</template>

<style>
body { margin: 0; background: #1c4a72; }
</style>

<style scoped>
.desktop {
  width: 2560px; height: 1600px; overflow: hidden; display: flex; flex-direction: column;
  font-family: Inter, "Noto Sans", sans-serif; color: #1d1133;
  background: linear-gradient(90deg, rgba(24,70,110,.9) 0, rgba(32,75,115,.9) 300px, rgba(36,66,108,.4) 1500px, rgba(58,66,116,0) 2150px), linear-gradient(180deg, #d93a5e 0, #d93a5e 60px, #1b2a4a 300px, #241f42 1480px, #46214a 1490px, #39305f 1530px, #39497b 1600px);
}
.defs { position: absolute; }
svg { display: block; flex: none; }
.fit { display: inline-block; white-space: nowrap; }

.menubar {
  flex: none; box-sizing: border-box; height: 50px; padding: 0 0 3px 44px;
  display: grid; align-items: center; font-size: 26px; color: #f3f2f8;
  grid-template-columns: 70.500px 130px 84.500px 87px 100px 128px 175.500px 106px 137.500px 442px 75px 68px 56px 88px 69px 234px 63px 62px 61px 139px 138px;
  background: linear-gradient(90deg, #d6355f 0 530px, #3c9fcb 540px, #1c6da6 1500px) 0 48px / 100% 2px no-repeat, linear-gradient(90deg, #7d669b 0, #75699f 300px, #5f74ac 700px, #4a79b1 950px, #367eb5 1300px, #267ab4 1650px, #1b71ae 2200px, #1a6cab 2560px);
}
.menubar > div { text-shadow: 0 3px 6px rgba(0,0,0,.25); }
.strong { font-weight: 700; }
.shade { filter: drop-shadow(0 3px 3px rgba(0,0,0,.2)); }
.drop-n { font: 600 15px Inter, sans-serif; fill: #fff; text-anchor: middle; }

.window {
  flex: none; box-sizing: border-box; height: 1434px; border-radius: 20px; overflow: hidden; display: flex; flex-direction: column;
  background: #fff; border-bottom: 4px solid #a5a5a5; box-shadow: 0 0 0 1px rgba(20,20,60,.35);
}
.chrome { position: relative; height: 226px; flex: none; }
.theme { position: absolute; left: 0; top: 0; }
.chrome::after { content: ""; position: absolute; left: 0; right: 0; bottom: 0; height: 2px; background: rgba(90,60,60,.42); }
.chrome::before { content: ""; position: absolute; z-index: 1; left: 0; right: 0; top: 0; height: 30px; border-top: 2px solid rgba(255,225,235,.65); border-radius: 20px 20px 0 0; }
.tabs { position: relative; height: 88px; display: flex; align-items: center; padding-left: 26px; box-sizing: border-box; }
.light { width: 24px; height: 24px; margin-right: 16px; border-radius: 50%; box-sizing: border-box; flex: none; }
.red { background: #fc605b; border: 1px solid #e04a44; }
.amber { background: #fdbc40; border: 1px solid #dfa033; }
.green { background: #34c749; border: 1px solid #28a938; }
.tab {
  box-sizing: border-box; width: 446px; height: 76px; margin: 0 30px 0 68px; display: flex; align-items: center; padding-left: 15px;
  border: 3px solid #a974fb; border-radius: 9px; background: rgba(255,255,255,.8);
}
.tab-title { width: 340px; margin: 4px 2px 0 11px; font-size: 22px; mask-image: linear-gradient(90deg, #000 305px, transparent 345px); }
.plus { margin-top: 2px; }

.toolbar {
  position: relative; height: 80px; padding-left: 33px; display: grid; align-items: center; background: rgba(255,255,255,.78);
  grid-template-columns: 73px 71.500px 259.500px 1917px 72px 73px 60px;
}
.dim { opacity: .45; }
.urlbar {
  width: 1686px; height: 64px; border-radius: 8px; background: rgba(255,255,255,.9); box-sizing: border-box; padding-left: 16.500px;
  display: grid; align-items: center; grid-template-columns: 58.500px 48px 1514px 40px; font-size: 28px; color: #8f879f;
}
.url { width: 1504px; margin-top: 1px; display: flex; mask-image: linear-gradient(90deg, #000 1440px, transparent 1502px); }
.url b { font-weight: 400; color: #1d1133; }
.bookmarks {
  position: relative; box-sizing: border-box; height: 58px; padding: 0 0 1px 24px; display: grid; align-items: center; font-size: 22px; background: rgba(255,255,255,.78);
  grid-template-columns: 226px 275px 226px 295px 295px 293px 295px 333px 55px 220px;
}
.bookmarks a { display: flex; align-items: center; height: 34px; }
.bookmarks a .fit { margin-top: 1px; }
.w38 { width: 38px; } .w39 { width: 39px; } .w40 { width: 40px; } .w41 { width: 41px; } .w42 { width: 42px; } .w45 { width: 45px; } .w47 { width: 47px; }
.tiny-i { font: italic 700 8px "Liberation Sans", sans-serif; fill: #fff; text-anchor: middle; }
.tiny-b { font: 700 6.5px "Liberation Sans", sans-serif; fill: #fff; text-anchor: middle; }
.b-mark { font: 700 12px "Liberation Sans", sans-serif; fill: #fff; text-anchor: middle; }
.s-mark { font: 700 27px "Liberation Sans", sans-serif; fill: #000; stroke: #000; text-anchor: middle; }

.page { flex: 1; display: flex; flex-direction: column; background: #fff; font-family: "Open Sans", "Noto Sans", sans-serif; color: #373a3c; }
.lesson { box-sizing: border-box; height: 146px; padding-left: 60px; display: flex; align-items: center; gap: 60px; border-bottom: 2px solid #bbb; }
.lesson-title { font-size: 40px; line-height: 50px; }
.lesson-sub { font-size: 24px; line-height: 36px; }
.banner { margin: 0 24px; height: 169px; display: flex; align-items: flex-start; background: #f3faf8; }
.check { margin: 35px 0 0 328px; }
.verdict { margin: 17px 0 0 33px; width: 1323px; }
.congrats { font-size: 48px; font-weight: 700; line-height: 70px; }
.topass { margin: 9px 0 0 4px; font-size: 24px; line-height: 34px; display: flex; gap: 13px; }
.keep { margin-top: 41px; width: 245px; height: 72px; padding: 0 0 0 1px; border: 0; border-radius: 4px; background: #2d73cb; color: #fff; font: 600 26px "Open Sans", sans-serif; }
.grade { margin: 5px 0 0 48px; height: 136px; box-sizing: border-box; padding: 23px 0 0 36px; border-left: 2px solid #dde2e1; font-size: 24px; line-height: 34px; }
.score { font-size: 48px; line-height: 56px; color: #1f8354; }

.quiz { margin: 97px 344px 0; width: 1872px; }
h1 { margin: 0; font-size: 68px; font-weight: 700; line-height: 84px; }
h1 .fit { line-height: 84px; vertical-align: top; }
.points { margin-top: 38px; padding-bottom: 39px; font-size: 24px; font-weight: 700; line-height: 34px; border-bottom: 2px solid #e1e1e1; }
.question { display: flex; align-items: flex-start; height: 128px; }
.num { width: 51px; margin-top: 37px; font-size: 28px; line-height: 40px; }
.prompt { width: 1365px; margin-top: 49px; font-size: 44px; line-height: 60px; }
.math { margin-top: 36px; }
.math text { font-family: "Liberation Serif", serif; fill: #373a3c; }
.m52 { font-size: 52px; } .m37 { font-size: 37px; } .m43 { font-size: 43px; } .it { font-style: italic; }
.math .ask { font: 44px "Open Sans", sans-serif; }
.badge { margin: 36px 0 0 74px; width: 192px; height: 48px; border-radius: 24px; background: #757575; color: #fff; font-size: 24px; font-weight: 700; line-height: 48px; text-align: center; }
.options { margin: 39px 0 0 49px; display: flex; flex-direction: column; }
.options label { height: 40px; margin-bottom: 42px; display: flex; align-items: center; font: 38px/44px "Liberation Serif", serif; gap: 20px; }
.options label .fit { margin-top: 4px; }
.options label.on { margin-bottom: 36px; font-size: 34px; }
.options label.on .fit { margin-top: -2px; }
.radio { box-sizing: border-box; width: 40px; height: 40px; border: 4px solid #bdbdbd; border-radius: 50%; flex: none; }
.on .radio { border-color: #666; background: radial-gradient(circle, #666 9.500px, transparent 10.500px); }

.shelf { flex: none; height: 116px; display: flex; align-items: flex-start; padding-left: 208px; }
.file { width: 238px; margin-right: 22px; display: flex; flex-direction: column; align-items: center; }
.thumb { box-sizing: border-box; width: 143px; height: 22px; border: 4px solid #404c66; border-top: 0; border-radius: 0 0 8px 8px; background: #1a243d; display: flex; justify-content: center; }
.thumb i { width: 91px; height: 8px; background: #c3c3c3; border-radius: 0 0 3px 3px; }
.fname { margin-top: 4px; width: 238px; height: 34px; border-radius: 5px; background: linear-gradient(#9d9d9d, #b5b5b5); color: #5b5b5b; font-size: 24px; font-weight: 600; line-height: 35px; text-align: center; }
.dock {
  position: relative; z-index: 2; flex: none; box-sizing: border-box; width: 1623px; height: 108px; margin-top: -2px; padding-left: 5px; display: flex; border-radius: 32px;
  background: linear-gradient(90deg, #7180ae 0, #7480ae 500px, rgba(116,128,174,0) 1100px), linear-gradient(180deg, #8974a6, #857bb0);
  box-shadow: inset 0 0 0 2px rgba(255,255,255,.17), 0 0 100px rgba(0,0,0,.28);
}
.app { width: 90px; height: 108px; overflow: visible; }
.sep { width: 2px; height: 80px; margin: 14px 18.500px 0 21px; background: #45467f; flex: none; }
.count { font: 500 21px Inter, sans-serif; fill: #fff; text-anchor: middle; }
.pages { font: 500 8px Inter, sans-serif; fill: #fff; }
.pylabel { font: 500 16px Inter, sans-serif; letter-spacing: -.8px; fill: #fff; text-anchor: middle; }
</style>
